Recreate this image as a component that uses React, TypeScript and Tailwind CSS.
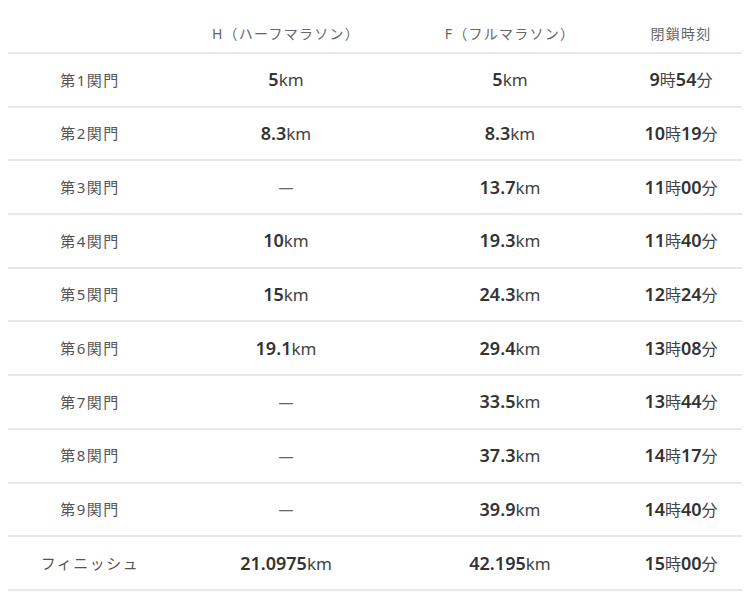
const rows = [
  { label: '第1関門', h: '5', f: '5', hh: '9', mm: '54' },
  { label: '第2関門', h: '8.3', f: '8.3', hh: '10', mm: '19' },
  { label: '第3関門', h: null, f: '13.7', hh: '11', mm: '00' },
  { label: '第4関門', h: '10', f: '19.3', hh: '11', mm: '40' },
  { label: '第5関門', h: '15', f: '24.3', hh: '12', mm: '24' },
  { label: '第6関門', h: '19.1', f: '29.4', hh: '13', mm: '08' },
  { label: '第7関門', h: null, f: '33.5', hh: '13', mm: '44' },
  { label: '第8関門', h: null, f: '37.3', hh: '14', mm: '17' },
  { label: '第9関門', h: null, f: '39.9', hh: '14', mm: '40' },
  { label: 'フィニッシュ', h: '21.0975', f: '42.195', hh: '15', mm: '00' },
];

function Km({ value }: { value: string | null }) {
  if (!value) return <span className="text-[15px] text-[#666]">—</span>;
  return (
    <span>
      <span className="text-[18px] font-semibold text-[#333]">{value}</span>
      <span className="text-[17px] text-[#444]">km</span>
    </span>
  );
}

export default function App() {
  return (
    <div
      className="bg-white w-[750px] h-[598px] px-2"
      style={{ fontFamily: '"Noto Sans", "Noto Sans CJK JP", sans-serif' }}
    >
      <div className="grid grid-cols-[164px_228px_220px_122px] h-[54px] border-b-2 border-[#e8e8e8] items-end pb-[8px] text-[14px] text-[#666] tracking-[0.09em] text-center">
        <div></div>
        <div>H（ハーフマラソン）</div>
        <div>F（フルマラソン）</div>
        <div>閉鎖時刻</div>
      </div>
      {rows.map((r) => (
        <div
          key={r.label}
          className="grid grid-cols-[164px_228px_220px_122px] h-[53.7px] border-b-2 border-[#e8e8e8] items-center text-center"
        >
          <div className="text-[15px] text-[#555] tracking-[0.1em]">{r.label}</div>
          <div><Km value={r.h} /></div>
          <div><Km value={r.f} /></div>
          <div>
            <span className="text-[18px] font-semibold text-[#333]">{r.hh}</span>
            <span className="text-[16px] text-[#444]">時</span>
            <span className="text-[18px] font-semibold text-[#333]">{r.mm}</span>
            <span className="text-[16px] text-[#444]">分</span>
          </div>
        </div>
      ))}
    </div>
  );
}
